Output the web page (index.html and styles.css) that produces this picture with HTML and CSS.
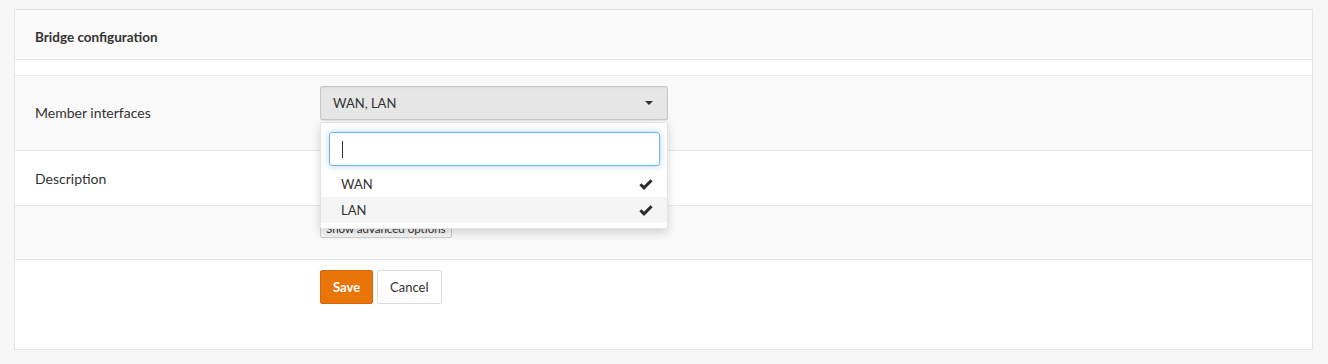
FILE: index.html
```html
<!DOCTYPE html>
<html>
<head>
<meta charset="utf-8">
<link rel="stylesheet" href="styles.css">
</head>
<body>
<div class="panel">
  <div class="row head"><strong>Bridge configuration</strong></div>
  <div class="row spacer"></div>
  <div class="row member">
    <div class="label">Member interfaces</div>
    <div class="control">
      <div class="select-wrap">
        <button class="select">WAN, LAN<span class="caret"></span></button>
        <div class="dropdown">
          <div class="search"><span class="cursor"></span></div>
          <ul class="options">
            <li>WAN<svg class="check" viewBox="0 0 14 12"><polyline points="1.4,6.2 5,9.8 12.6,2.2"/></svg></li>
            <li class="hover">LAN<svg class="check" viewBox="0 0 14 12"><polyline points="1.4,6.2 5,9.8 12.6,2.2"/></svg></li>
          </ul>
        </div>
      </div>
    </div>
  </div>
  <div class="row desc">
    <div class="label">Description</div>
    <div class="control"><div class="input"></div></div>
  </div>
  <div class="row adv">
    <div class="label"></div>
    <div class="control"><button class="btn-xs">Show advanced options</button></div>
  </div>
  <div class="row actions">
    <div class="label"></div>
    <div class="control buttons">
      <button class="btn primary">Save</button>
      <button class="btn default">Cancel</button>
    </div>
  </div>
</div>
</body>
</html>
```

FILE: styles.css
```css
* { box-sizing: border-box; }
html, body { margin: 0; padding: 0; }
body {
  background: #f7f7f7;
  font-family: Lato, "Noto Sans", sans-serif;
  font-size: 14px;
  color: #333;
}
.panel {
  margin: 9px 0 0 14px;
  width: 1299px;
  height: 341px;
  border: 1px solid #e5e5e5;
  background: #fff;
  display: flex;
  flex-direction: column;
}
.row {
  display: flex;
  align-items: center;
  border-bottom: 1px solid #e7e7e7;
}
.head {
  height: 50px;
  background: #fafafa;
  padding-left: 20px;
  padding-top: 4px;
  font-size: 13.5px;
}
.head strong { font-weight: 700; color: #333; }
.spacer { height: 16px; background: #fff; }
.member { height: 75px; background: #f9f9f9; align-items: flex-start; }
.member .label { margin-top: 28px; }
.desc { height: 55px; background: #fff; }
.adv { height: 54px; background: #f9f9f9; align-items: flex-start; }
.actions { height: 89px; border-bottom: none; align-items: flex-start; }
.label {
  width: 305px;
  padding-left: 20px;
  flex: none;
}
.control { flex: 1; }
.member .control { padding-top: 10px; }
.select-wrap { position: relative; width: 348px; }
.select {
  width: 348px;
  height: 34px;
  border: 1px solid #c9c9c9;
  border-radius: 2px;
  background: #e6e6e6;
  box-shadow: inset 0 1px 2px rgba(0,0,0,0.06), 0 1px 1px rgba(0,0,0,0.08);
  font-family: inherit;
  font-size: 13px;
  color: #333;
  text-align: left;
  padding: 0 12px;
  display: flex;
  align-items: center;
  justify-content: space-between;
}
.caret {
  width: 0; height: 0;
  border-left: 4px solid transparent;
  border-right: 4px solid transparent;
  border-top: 4px solid #333;
  margin-right: 2px;
}
.dropdown {
  position: absolute;
  left: 0;
  top: 36px;
  width: 348px;
  background: #fff;
  border: 1px solid #e3e3e3;
  border-radius: 2px;
  box-shadow: 0 4px 10px rgba(0,0,0,0.15);
  padding: 9px 0 5px 0;
  z-index: 5;
}
.search {
  margin: 0 7px 0 8px;
  height: 34px;
  border: 1px solid #74b3ea;
  border-radius: 3px;
  box-shadow: 0 0 6px rgba(102,175,233,0.55);
  display: flex;
  align-items: center;
  padding-left: 12px;
}
.cursor { width: 1px; height: 17px; background: #333; }
.options { list-style: none; margin: 5px 0 0 0; padding: 0; }
.options li {
  height: 26px;
  padding: 0 14px 0 20px;
  display: flex;
  align-items: center;
  justify-content: space-between;
  font-size: 13px;
  color: #333;
}
.options li.hover { background: #f5f5f5; }
.check {
  width: 14px;
  height: 12px;
  fill: none;
  stroke: #2b2b2b;
  stroke-width: 3;
  stroke-linejoin: miter;
}
.input {
  width: 348px;
  height: 32px;
  border: 1px solid #ccc;
  border-radius: 2px;
  background: #fff;
}
.adv .control { padding-top: 12px; }
.btn-xs {
  height: 20px;
  border: 1px solid #ccc;
  border-radius: 2px;
  background: #f7f7f7;
  font-family: inherit;
  font-size: 11.5px;
  color: #333;
  padding: 0 5px;
  white-space: nowrap;
}
.buttons { display: flex; gap: 4px; padding-top: 10px; }
.btn {
  height: 34px;
  border-radius: 2px;
  font-family: inherit;
  font-size: 13px;
  padding: 0 12px;
}
.primary {
  background: #e97408;
  border: 1px solid #d4650a;
  color: #fff;
  font-weight: 700;
}
.default {
  background: #fff;
  border: 1px solid #dedede;
  color: #333;
}
```
